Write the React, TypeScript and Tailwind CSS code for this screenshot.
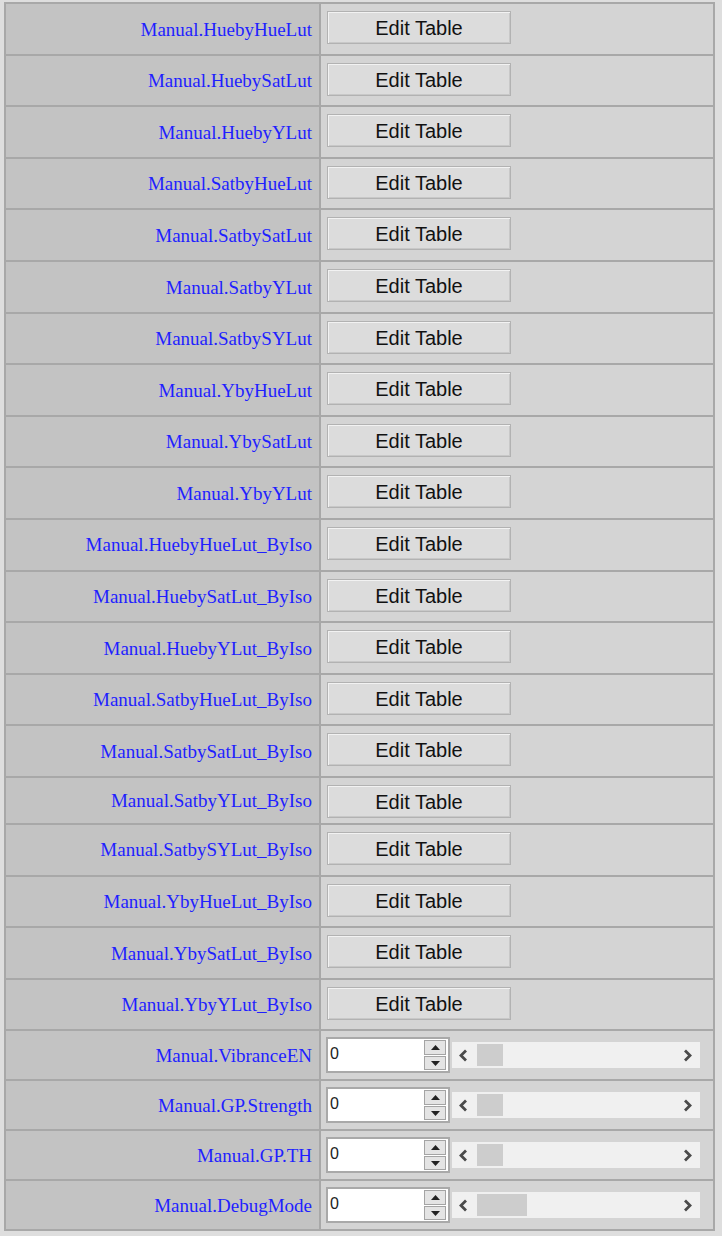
import React from 'react';

const tableRows = [
  'Manual.HuebyHueLut',
  'Manual.HuebySatLut',
  'Manual.HuebyYLut',
  'Manual.SatbyHueLut',
  'Manual.SatbySatLut',
  'Manual.SatbyYLut',
  'Manual.SatbySYLut',
  'Manual.YbyHueLut',
  'Manual.YbySatLut',
  'Manual.YbyYLut',
  'Manual.HuebyHueLut_ByIso',
  'Manual.HuebySatLut_ByIso',
  'Manual.HuebyYLut_ByIso',
  'Manual.SatbyHueLut_ByIso',
  'Manual.SatbySatLut_ByIso',
  'Manual.SatbyYLut_ByIso',
  'Manual.SatbySYLut_ByIso',
  'Manual.YbyHueLut_ByIso',
  'Manual.YbySatLut_ByIso',
  'Manual.YbyYLut_ByIso',
];

const sliderRows = [
  { name: 'Manual.VibranceEN', wide: false },
  { name: 'Manual.GP.Strength', wide: false },
  { name: 'Manual.GP.TH', wide: false },
  { name: 'Manual.DebugMode', wide: true },
];

const Label: React.FC<{ text: string }> = ({ text }) => (
  <div
    className="w-[315px] shrink-0 self-stretch flex items-center justify-end pr-[7px] pt-[2px] bg-[#c3c3c3] border-r-2 border-[#a8a8a8] text-[19px] text-[#1f1fff]"
    style={{ fontFamily: '"Liberation Serif", "Times New Roman", serif' }}
  >
    {text}
  </div>
);

const EditButton = () => (
  <button
    className="w-[184px] h-[33px] bg-[#dcdcdc] border border-[#b2b2b2] shadow-[inset_1px_1px_0_#f2f2f2,inset_-1px_-1px_0_#c8c8c8] text-[20px] text-[#111] leading-none pt-[1px]"
    style={{ fontFamily: '"Liberation Sans", Arial, sans-serif' }}
  >
    Edit Table
  </button>
);

const Spinner = () => (
  <div className="w-[22px] h-[30px] flex flex-col gap-[1px] mr-[2px]">
    <div className="flex-1 flex items-center justify-center bg-[#e4e4e4] border border-[#a4a4a4]">
      <svg width="9" height="5" viewBox="0 0 9 5">
        <path d="M0 5 L4.5 0 L9 5 Z" fill="#222" />
      </svg>
    </div>
    <div className="flex-1 flex items-center justify-center bg-[#e4e4e4] border border-[#a4a4a4]">
      <svg width="9" height="5" viewBox="0 0 9 5">
        <path d="M0 0 L4.5 5 L9 0 Z" fill="#222" />
      </svg>
    </div>
  </div>
);

const Chevron: React.FC<{ dir: 'left' | 'right' }> = ({ dir }) => (
  <svg width="10" height="13" viewBox="0 0 10 13">
    <path
      d={dir === 'left' ? 'M8 1.5 L3 6.5 L8 11.5' : 'M2 1.5 L7 6.5 L2 11.5'}
      fill="none"
      stroke="#4a4a4a"
      strokeWidth="2.8"
    />
  </svg>
);

export default function App() {
  return (
    <div className="w-[722px] h-[1236px] bg-[#dedede] pl-[4px] pt-[2px] overflow-hidden">
      <div className="w-[711px] border-t-2 border-l-2 border-r-2 border-[#a8a8a8]">
        {tableRows.map((name, i) => (
          <div
            key={name}
            className={
              'flex border-b-2 border-[#a8a8a8] ' + (i === 15 ? 'h-[47px]' : 'h-[51.6px]')
            }
          >
            <Label text={name} />
            <div className="flex-1 bg-[#d4d4d4] pl-[6px] pt-[7px]">
              <EditButton />
            </div>
          </div>
        ))}
        {sliderRows.map((r) => (
          <div key={r.name} className="flex h-[50px] border-b-2 border-[#a8a8a8]">
            <Label text={r.name} />
            <div className="flex-1 bg-[#d4d4d4] flex items-center pl-[5px]">
              <div className="w-[124px] h-[36px] bg-white border-2 border-[#a9a9a9] flex items-center">
                <div
                  className="flex-1 self-start pl-[2px] pt-[3px] text-[16px] text-[#222]"
                  style={{ fontFamily: '"Liberation Sans", Arial, sans-serif' }}
                >
                  0
                </div>
                <Spinner />
              </div>
              <div className="ml-[2px] w-[248px] h-[26px] bg-[#f0f0f0] flex items-center">
                <div className="w-[22px] flex justify-center">
                  <Chevron dir="left" />
                </div>
                <div
                  className={
                    'h-[22px] bg-[#cdcdcd] ml-[3px] ' + (r.wide ? 'w-[50px]' : 'w-[26px]')
                  }
                />
                <div className="flex-1" />
                <div className="w-[24px] flex justify-center">
                  <Chevron dir="right" />
                </div>
              </div>
            </div>
          </div>
        ))}
      </div>
    </div>
  );
}
